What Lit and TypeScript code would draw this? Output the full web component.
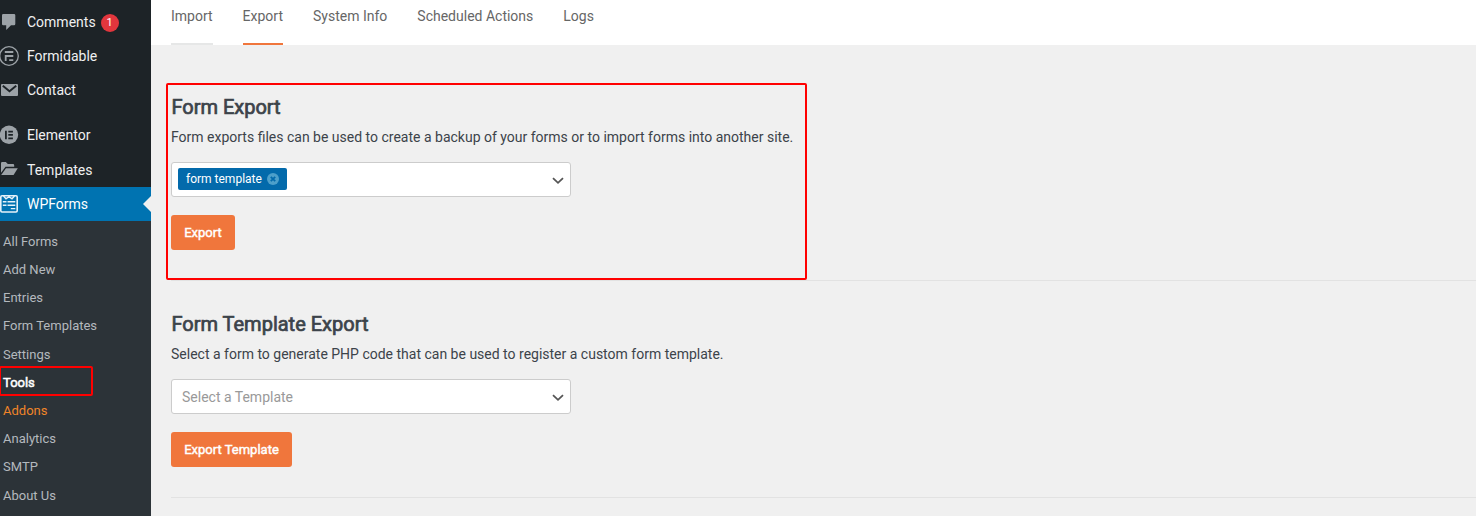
import { LitElement, html, svg, css } from "lit";
import { customElement } from "lit/decorators.js";
import { classMap } from "lit/directives/class-map.js";

const icons: Record<string, unknown> = {
  comments: svg`<path fill="currentColor" d="M3.200 2h10.800q1.300 0 1.300 1.200v8.800q0 1.200-1.300 1.200H11L6.200 18v-4.800h-3Q2 13.200 2 12V3.200Q2 2 3.200 2z"/>`,
  formidable: svg`<circle cx="9" cy="10" r="9.300" fill="none" stroke="currentColor" stroke-width="1.300"/><path fill="currentColor" d="M4.800 5h8.500v1.900H4.800zM4.800 8.900h8.500v2H6.600V15H4.800zM9.200 13.200h4.100V15H9.200z"/>`,
  contact: svg`<path fill="currentColor" d="M2 4h15q1 0 1 1v10q0 1-1 1H2q-1 0-1-1V5q0-1 1-1z"/><path fill="none" stroke="#1d2327" stroke-width="1.900" d="M2.800 5.800l6.700 5.500 6.700-5.500"/>`,
  elementor: svg`<circle cx="9" cy="9.700" r="9.200" fill="currentColor"/><path fill="#1d2327" d="M5 5.700h1.800v8.600H5zM8.300 5.700h4.600v1.700H8.300zM8.300 9.100h4.600v1.700H8.300zM8.300 12.600h4.600v1.700H8.300z"/>`,
  templates: svg`<path fill="currentColor" d="M1 3.200q0-1.200 1.200-1.200h3.600l2 2H13q1.200 0 1.200 1.200v1.600H5.500L1 12.800z"/><path fill="currentColor" d="M6 8.200h11.800L13.600 15H1.200z"/>`,
  wpforms: svg`<rect x=".8" y="1.800" width="16.400" height="16.200" rx="1.200" fill="none" stroke="currentColor" stroke-width="1.600"/><path fill="none" stroke="currentColor" stroke-width="1.400" d="M3.500 2l2.500 2.800L9 2.600l3 2.200L14.500 2M2.800 7.700h3.700M7.500 7.700h7.800M2.800 11.200h3.700M7.500 11.200h7.800M10.800 14.600h4.500"/>`,
};

const chevron = html`<svg class="chevron" width="12" height="8" viewBox="0 0 12 8"><path d="M1 1.200l5 4.600 5-4.600" fill="none" stroke="#555" stroke-width="1.800"/></svg>`;

@customElement("app-root")
export class AppRoot extends LitElement {
  static styles = css`
    :host { display: flex; height: 516px; overflow: hidden; background: #f0f0f0; font: 14px/20px Roboto, sans-serif; color: #3c434a; }
    *, *::after { box-sizing: border-box; }
    .side { width: 151px; flex: none; background: #1d2327; padding-top: 5px; }
    .item { display: flex; align-items: center; height: 34px; color: #f0f0f1; position: relative; }
    .item svg { width: 20px; height: 20px; margin-right: 7px; color: #9ca2a7; overflow: visible; }
    .gap { margin-top: 11px; }
    .low { margin-top: 1px; }
    .current { background: #0073b1; color: #fff; }
    .current svg { color: #e5f2f9; }
    .current::after { content: ""; position: absolute; right: 0; top: 9px; border: 8px solid transparent; border-right-color: #f0f0f0; border-left: 0; }
    .badge { width: 18px; height: 18px; border-radius: 9px; background: #e2363d; margin-left: 5px; margin-top: 1px; font-size: 11px; line-height: 18px; text-align: center; color: #fff; }
    .sub { background: #2c3338; height: 295px; padding: 6.900px 0 0 3px; font-size: 13px; color: #b4b9be; }
    .sub div { height: 28.200px; line-height: 28.200px; position: relative; }
    .sub .tools { color: #fff; -webkit-text-stroke: .5px #fff; }
    .sub .tools::after { content: ""; position: absolute; left: -4px; top: -2.900px; width: 94px; height: 30px; border: 2px solid #f00; border-radius: 2px; }
    .sub .addons { color: #f18529; }
    .main { flex: 1; min-width: 0; }
    .tabs { display: flex; gap: 30px; height: 45px; padding-left: 20px; background: #fff; color: #666; }
    .tab { height: 45px; padding-top: 6px; border-bottom: 2px solid transparent; }
    .import { border-color: #e6e7e7; }
    .active { border-color: #f0763c; }
    .content { padding-left: 20px; }
    .block { height: 217px; border-bottom: 1px solid #e2e2e2; position: relative; padding-top: 31px; }
    .first { height: 236px; padding-top: 50px; }
    .first::after { content: ""; position: absolute; left: -5px; top: 38px; width: 641px; height: 197px; border: 2px solid #f00; border-radius: 2px; }
    h2 { font-size: 20px; line-height: 24px; font-weight: 400; margin: 0; padding-left: .4px; -webkit-text-stroke: .7px currentColor; }
    p { margin: 8px 0 15px; line-height: 20px; }
    .select { width: 400px; height: 35px; background: #fff; border: 1px solid #ccc; border-radius: 3px; display: flex; align-items: center; padding: 0 6px 0 10px; color: #999; }
    .multi { padding-left: 6px; }
    .chevron { margin-left: auto; margin-top: 2px; }
    .chip { height: 22px; display: flex; align-items: center; gap: 5px; padding: 0 8px; border-radius: 2px; background: #036aab; color: #fff; font-size: 12px; margin-top: -1px; }
    .btn { display: inline-block; margin-top: 18px; height: 35px; line-height: 35px; padding: 0 12.800px 0 13.200px; border-radius: 3px; background: #f0763c; color: #fff; font-size: 13px; -webkit-text-stroke: .45px #fff; }
  `;

  item(icon: string, label: string, cls = "") {
    return html`<div class="item ${cls}"><svg viewBox="0 0 20 20">${icons[icon]}</svg>${label}${icon === "comments" ? html`<span class="badge">1</span>` : ""}</div>`;
  }

  render() {
    const subs = ["All Forms", "Add New", "Entries", "Form Templates", "Settings", "Tools", "Addons", "Analytics", "SMTP", "About Us"];
    return html`
      <nav class="side">
        ${this.item("comments", "Comments")}
        ${this.item("formidable", "Formidable")}
        ${this.item("contact", "Contact")}
        ${this.item("elementor", "Elementor", "gap")}
        ${this.item("templates", "Templates", "low")}
        ${this.item("wpforms", "WPForms", "current")}
        <div class="sub">
          ${subs.map((s) => html`<div class=${classMap({ tools: s === "Tools", addons: s === "Addons" })}>${s}</div>`)}
        </div>
      </nav>
      <main class="main">
        <div class="tabs">
          ${["Import", "Export", "System Info", "Scheduled Actions", "Logs"].map(
            (t) => html`<span class=${classMap({ tab: true, import: t === "Import", active: t === "Export" })}>${t}</span>`,
          )}
        </div>
        <div class="content">
          <section class="block first">
            <h2>Form Export</h2>
            <p>Form exports files can be used to create a backup of your forms or to import forms into another site.</p>
            <div class="select multi">
              <span class="chip">form template
                <svg width="12" height="12" viewBox="0 0 12 12"><circle cx="6" cy="6" r="6" fill="#4d9fca"/><path d="M3.800 3.800l4.400 4.400M8.200 3.800L3.800 8.200" stroke="#036aab" stroke-width="1.800"/></svg>
              </span>${chevron}
            </div>
            <span class="btn">Export</span>
          </section>
          <section class="block">
            <h2>Form Template Export</h2>
            <p>Select a form to generate PHP code that can be used to register a custom form template.</p>
            <div class="select">Select a Template${chevron}</div>
            <span class="btn">Export Template</span>
          </section>
        </div>
      </main>`;
  }
}
